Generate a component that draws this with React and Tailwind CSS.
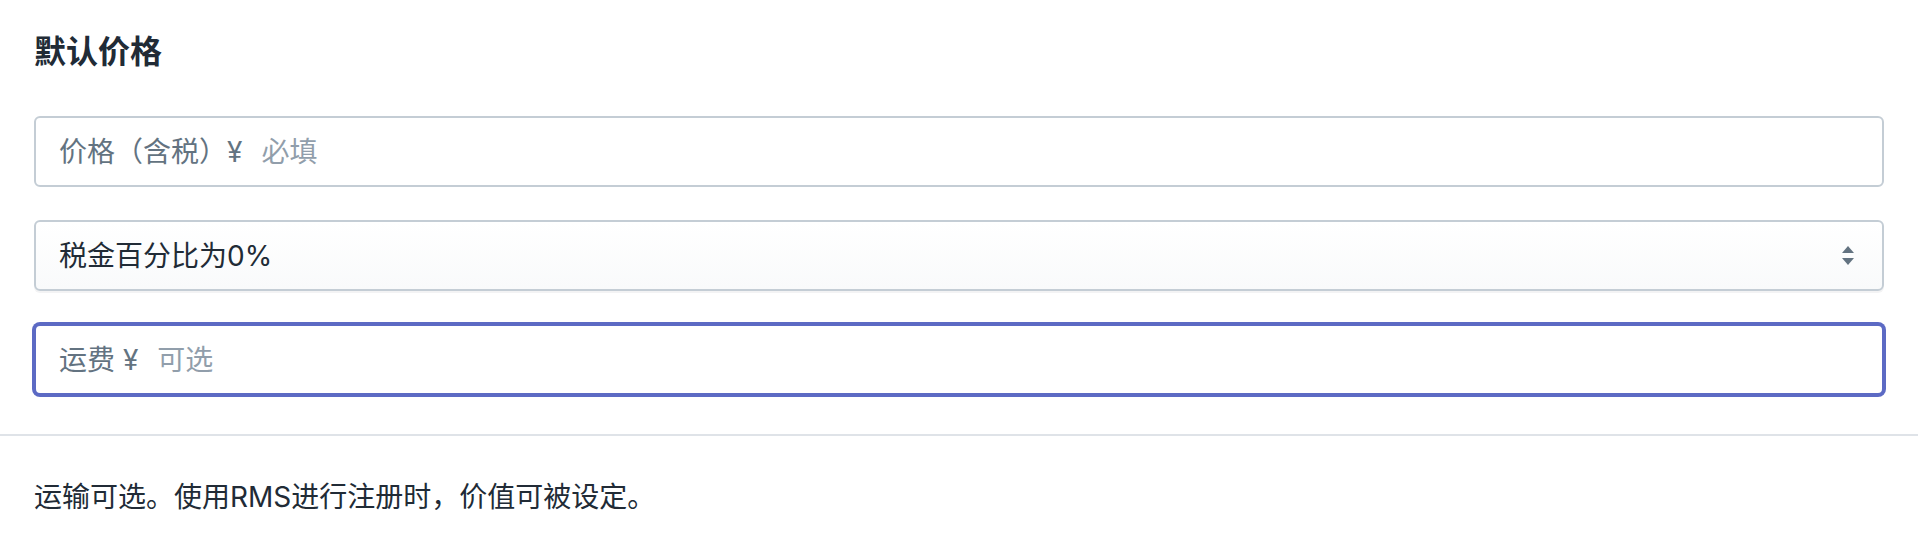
import React from 'react';

const font = { fontFamily: 'Inter, "Noto Sans CJK SC", sans-serif' };

const PriceField = ({ prefix, placeholder, focused }) => (
  <div
    className={
      'flex items-center h-[71px] rounded-[6px] border-2 bg-white pl-[23px] pr-[23px] ' +
      (focused
        ? 'border-[#5c6ac4] shadow-[0_0_0_2px_#5c6ac4]'
        : 'border-[#c4cdd5]')
    }
  >
    <span className="text-[28px] text-[#637381] mr-[19px] whitespace-pre shrink-0">{prefix}</span>
    <input
      type="text"
      placeholder={placeholder}
      className="flex-1 min-w-0 bg-transparent outline-none text-[28px] text-[#212b36] placeholder:text-[#919eab]"
      style={font}
    />
  </div>
);

const TaxSelect = () => (
  <div className="flex items-center h-[71px] rounded-[6px] border-2 border-[#c4cdd5] bg-linear-to-b from-white to-[#f9fafb] shadow-[0_2px_0_0_rgba(22,29,37,0.05)] pl-[23px] pr-[28px]">
    <select
      className="flex-1 min-w-0 appearance-none bg-transparent outline-none text-[28px] text-[#212b36]"
      style={font}
      defaultValue="0"
    >
      <option value="0">税金百分比为0%</option>
    </select>
    <svg width="12" height="20" viewBox="0 0 12 20" className="shrink-0">
      <polygon points="6,0 12,7 0,7" fill="#637381" />
      <polygon points="0,12 12,12 6,19" fill="#637381" />
    </svg>
  </div>
);

export default function App() {
  return (
    <div className="bg-white w-full min-h-[546px]" style={font}>
      <section className="px-[34px] pt-[32px] pb-[39px]">
        <h2 className="text-[32px] leading-[40px] font-semibold text-[#212b36]">默认价格</h2>
        <div className="mt-[44px] flex flex-col gap-[33px]">
          <PriceField prefix="价格（含税）¥" placeholder="必填" />
          <TaxSelect />
          <PriceField prefix="运费 ¥" placeholder="可选" focused />
        </div>
      </section>
      <div className="border-t-2 border-[#dfe3e8]" />
      <section className="px-[34px] pt-[40px] pb-[40px]">
        <p className="text-[28px] leading-[42px] text-[#212b36]">运输可选。使用RMS进行注册时，价值可被设定。</p>
      </section>
    </div>
  );
}
